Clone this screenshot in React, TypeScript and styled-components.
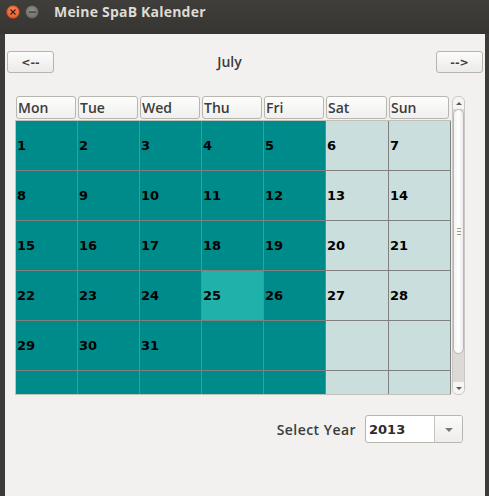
import React from "react";
import styled, { createGlobalStyle } from "styled-components";

const Global = createGlobalStyle`
  html, body { margin: 0; padding: 0; background: #3c3b37; }
  body { width: 489px; height: 496px; overflow: hidden; font-family: "Open Sans", "DejaVu Sans", sans-serif; }
`;

const Window = styled.div`
  width: 489px;
  height: 496px;
  display: flex;
  flex-direction: column;
  background: #3c3b37;
`;

const TitleBar = styled.div`
  height: 34px;
  display: flex;
  align-items: center;
  padding: 0 0 11px 6px;
  box-sizing: border-box;
  gap: 5px;
  background: linear-gradient(#3f3e3a, #363531);
`;

const WinBtn = styled.div<{ $kind: "close" | "min" }>`
  width: 14px;
  height: 14px;
  border-radius: 50%;
  display: flex;
  align-items: center;
  justify-content: center;
  box-sizing: border-box;
  border: 1px solid ${(p) => (p.$kind === "close" ? "#a9391b" : "#4a4944")};
  background: ${(p) =>
    p.$kind === "close"
      ? "radial-gradient(circle at 50% 35%, #f58a5f, #e0531f)"
      : "radial-gradient(circle at 50% 35%, #8d8c87, #6a6964)"};
`;

const Title = styled.div`
  margin-left: 10px;
  color: #dfdbd2;
  font-family: "Open Sans", sans-serif;
  font-weight: 700;
  font-size: 14px;
  letter-spacing: 0.2px;
`;

const Content = styled.div`
  flex: 1;
  margin: 0 4px 0 5px;
  background: #f2f1f0;
  display: flex;
  flex-direction: column;
  padding: 17px 2px 0 2px;
`;

const NavRow = styled.div`
  display: flex;
  align-items: center;
  height: 22px;
`;

const NavButton = styled.button`
  width: 47px;
  height: 22px;
  padding: 0;
  border: 1px solid #b6b4ae;
  border-radius: 3px;
  background: linear-gradient(#fbfbfa, #ecebe9);
  color: #3c3c3c;
  font-family: "DejaVu Sans", sans-serif;
  font-weight: 700;
  font-size: 11px;
  display: flex;
  align-items: center;
  justify-content: center;
`;

const MonthLabel = styled.div`
  flex: 1;
  text-align: center;
  padding-right: 31px;
  padding-bottom: 2px;
  color: #3c3c3c;
  font-family: "Open Sans", sans-serif;
  font-weight: 600;
  font-size: 14px;
`;

const TableArea = styled.div`
  margin: 23px 0 0 8px;
  display: flex;
  gap: 1px;
`;

const TableCol = styled.div`
  width: 436px;
  display: flex;
  flex-direction: column;
`;

const HeaderRow = styled.div`
  display: grid;
  grid-template-columns: 62px 62px 62px 62px 62px 63px 62px;
  height: 24px;
  padding-left: 1px;
`;

const HeaderCell = styled.div`
  margin-right: 2px;
  height: 23px;
  box-sizing: border-box;
  border: 1px solid #b8b6b0;
  border-radius: 3px;
  background: linear-gradient(#fdfdfc, #f0efed);
  color: #3c3c3c;
  font-family: "Open Sans", sans-serif;
  font-weight: 600;
  font-size: 14px;
  display: flex;
  align-items: center;
  padding-left: 1px;
`;

const Body = styled.div`
  height: 275px;
  box-sizing: border-box;
  border: 1px solid #c2c0bb;
  border-right: none;
  overflow: hidden;
`;

const Grid = styled.div`
  display: grid;
  grid-template-columns: 62px 62px 62px 62px 62px 63px 62px;
  grid-auto-rows: 50px;
`;

const Cell = styled.div<{ $bg: string }>`
  background: ${(p) => p.$bg};
  border-right: 1px solid #808080;
  border-bottom: 1px solid #808080;
  display: flex;
  align-items: center;
  padding-left: 1px;
  color: #000;
  font-family: "DejaVu Sans", sans-serif;
  font-weight: 700;
  font-size: 13px;
`;

const ScrollBar = styled.div`
  width: 13px;
  height: 299px;
  display: flex;
  flex-direction: column;
  box-sizing: border-box;
  border: 1px solid #c9c7c2;
  border-radius: 6px;
  background: #dcdad6;
  overflow: hidden;
`;

const ScrollArrow = styled.div<{ $up?: boolean }>`
  height: 12px;
  background: #f6f5f4;
  display: flex;
  align-items: center;
  justify-content: center;
  &::after {
    content: "";
    width: 0;
    height: 0;
    border-left: 3px solid transparent;
    border-right: 3px solid transparent;
    ${(p) => (p.$up ? "border-bottom: 3px solid #5a5a5a;" : "border-top: 3px solid #5a5a5a;")}
  }
`;

const Thumb = styled.div`
  height: 245px;
  box-sizing: border-box;
  border: 1px solid #b9b7b2;
  border-radius: 6px;
  background: linear-gradient(90deg, #f4f3f2, #fefefe 50%, #eceae8);
  display: flex;
  align-items: center;
  justify-content: center;
`;

const Grip = styled.div`
  width: 4px;
  height: 7px;
  background: repeating-linear-gradient(#9a9994 0 1px, transparent 1px 3px);
`;

const Track = styled.div`
  flex: 1;
`;

const YearRow = styled.div`
  margin-top: 20px;
  display: flex;
  justify-content: flex-end;
  align-items: center;
  gap: 9px;
  padding-right: 20px;
`;

const YearLabel = styled.div`
  color: #3c3c3c;
  font-family: "Open Sans", sans-serif;
  font-weight: 600;
  font-size: 14px;
  letter-spacing: 0.45px;
`;

const Combo = styled.div`
  width: 98px;
  height: 28px;
  box-sizing: border-box;
  border: 1px solid #b8b6b0;
  border-radius: 3px;
  display: flex;
  background: #fff;
  overflow: hidden;
`;

const ComboText = styled.div`
  flex: 1;
  display: flex;
  align-items: center;
  padding-left: 3px;
  color: #2c2c2c;
  font-family: "DejaVu Sans", sans-serif;
  font-weight: 700;
  font-size: 13px;
`;

const ComboArrow = styled.div`
  width: 27px;
  border-left: 1px solid #c6c4bf;
  background: linear-gradient(#fbfbfa, #eeedeb);
  display: flex;
  align-items: center;
  justify-content: center;
  &::after {
    content: "";
    border-left: 4px solid transparent;
    border-right: 4px solid transparent;
    border-top: 4px solid #7a7a7a;
    margin-top: 2px;
  }
`;

const days = ["Mon", "Tue", "Wed", "Thu", "Fri", "Sat", "Sun"];

export default function App() {
  const cells: { n: number | null; col: number }[] = [];
  for (let i = 0; i < 42; i++) {
    const n = i + 1 <= 31 ? i + 1 : null;
    cells.push({ n, col: i % 7 });
  }
  const colorFor = (n: number | null, col: number) => {
    if (n === 25) return "#20b2aa";
    if (col >= 5) return "#c9dedd";
    return "#008b8b";
  };
  return (
    <>
      <Global />
      <Window>
        <TitleBar>
          <WinBtn $kind="close">
            <svg width="6" height="6" viewBox="0 0 6 6">
              <path d="M0.5 0.5 L5.5 5.5 M5.5 0.5 L0.5 5.5" stroke="#3a1a0e" strokeWidth="1.2" />
            </svg>
          </WinBtn>
          <WinBtn $kind="min">
            <svg width="7" height="2" viewBox="0 0 7 2">
              <rect x="0" y="0.5" width="7" height="1.2" fill="#3a3935" />
            </svg>
          </WinBtn>
          <Title>Meine SpaB Kalender</Title>
        </TitleBar>
        <Content>
          <NavRow>
            <NavButton>&lt;--</NavButton>
            <MonthLabel>July</MonthLabel>
            <NavButton>--&gt;</NavButton>
          </NavRow>
          <TableArea>
            <TableCol>
              <HeaderRow>
                {days.map((d) => (
                  <HeaderCell key={d}>{d}</HeaderCell>
                ))}
              </HeaderRow>
              <Body>
                <Grid>
                  {cells.map((c, i) => (
                    <Cell key={i} $bg={colorFor(c.n, c.col)}>
                      {c.n ?? ""}
                    </Cell>
                  ))}
                </Grid>
              </Body>
            </TableCol>
            <ScrollBar>
              <ScrollArrow $up />
              <Thumb>
                <Grip />
              </Thumb>
              <Track />
              <ScrollArrow />
            </ScrollBar>
          </TableArea>
          <YearRow>
            <YearLabel>Select Year</YearLabel>
            <Combo>
              <ComboText>2013</ComboText>
              <ComboArrow />
            </Combo>
          </YearRow>
        </Content>
      </Window>
    </>
  );
}
